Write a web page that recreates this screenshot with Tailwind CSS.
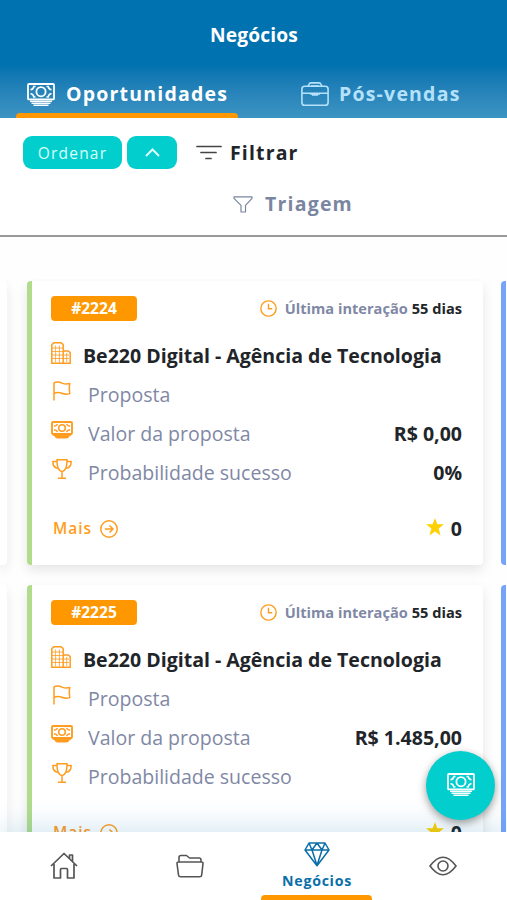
<!DOCTYPE html>
<html lang="pt-BR">
<head>
<meta charset="utf-8">
<title>Negócios</title>
<script src="https://cdn.jsdelivr.net/npm/@tailwindcss/browser@4"></script>
</head>
<body class="bg-[#fefefe] font-['Open_Sans','Noto_Sans',sans-serif]">
<svg class="hidden">
  <symbol id="money" viewBox="0 0 28 23">
    <g fill="none" stroke="currentColor" stroke-width="1.800">
      <rect x="1" y="1" width="26" height="15.400" rx="1"/>
      <circle cx="14" cy="8.700" r="4.600"/>
      <path d="M8.500 3.500H6.800Q6.300 6.300 3.500 6.800M19.500 3.500h1.700q.5 2.800 3.300 3.300M8.500 13.900H6.800q-.5-2.800-3.300-3.300M19.500 13.900h1.700q.5-2.800 3.300-3.300" stroke-width="1.500"/>
      <path d="M3 18.200h22M4.500 20.200h19M6.500 22.200h15" stroke-width="1.500"/>
    </g>
  </symbol>
  <symbol id="money-small" viewBox="0 0 22 18">
    <g fill="none" stroke="currentColor" stroke-width="1.900">
      <rect x="1" y="1" width="20" height="12" rx="1"/>
      <circle cx="11" cy="7" r="3.300" stroke-width="1.600"/>
      <path d="M6.500 3Q5.500 5 3 5.200M6.500 11Q5.500 9 3 8.800M15.500 3q1 2 3.500 2.200M15.500 11q1-2 3.500-2.200" stroke-width="1.500"/>
    </g>
    <path d="M1 12.800h20q-.5 2-2.500 2.500-1 2.200-3 2.200h-9q-2 0-3-2.200-2-.5-2.500-2.500z" fill="currentColor"/>
  </symbol>
  <symbol id="case" viewBox="0 0 28 24">
    <g fill="none" stroke="currentColor" stroke-width="1.600" stroke-linejoin="round">
      <rect x=".9" y="4.300" width="26.200" height="18.900" rx="2.800"/>
      <path d="M7 4.300l1-2q.6-1.400 2-1.400h8q1.400 0 2 1.400l1 2M1 11.300h26"/>
      <path d="M9 12h10M11 13h6M10 3.800h8" stroke-width="1.300"/>
    </g>
  </symbol>
  <symbol id="building" viewBox="0 0 20 22">
    <g fill="none" stroke="currentColor" stroke-width="1.500">
      <path d="M.8 21.200V2.500L3 .8h7l2.200 1.700v18.700zM12.200 9h5.200l1.800 1.600v10.600h-7M.8 21.200h18.400"/>
      <path d="M4.600 3.500v17M8.400 3.500v17M1 6h11M1 9.500h11M1 13h11M1 16.500h11M15.700 11v9M13 13h5M13 16.500h5" stroke-width=".8"/>
    </g>
  </symbol>
  <symbol id="flag" viewBox="0 0 18 20">
    <path d="M1 19.500V2C4 .2 6.500 1 9 2.100s4.500 1.300 7.800.5c-.7 3.400-.6 6.800 0 10-3 1-5.400.6-8-.3s-5-1.100-7.800.2" fill="none" stroke="currentColor" stroke-width="1.500" stroke-linejoin="round"/>
  </symbol>
  <symbol id="trophy" viewBox="0 0 20 20">
    <path d="M5 .8h10c.2 6-1 10.500-5 12-4-1.500-5.200-6-5-12zM5 2.500H.9c-.1 4 1.600 6.500 5.100 6.800M15 2.500h4.100c.1 4-1.600 6.500-5.100 6.800M10 12.800v6M6 19.200h8" fill="none" stroke="currentColor" stroke-width="1.500"/>
  </symbol>
  <symbol id="clock" viewBox="0 0 18 18">
    <path d="M9 .9a8.100 8.100 0 1 0 0 16.200A8.100 8.100 0 0 0 9 .9M9 4v5.300h4" fill="none" stroke="currentColor" stroke-width="1.500"/>
  </symbol>
  <symbol id="arrow" viewBox="0 0 18 18">
    <path d="M9 .8a8.200 8.200 0 1 0 0 16.400A8.200 8.200 0 0 0 9 .8M4.800 9h8M9.500 5.500L13 9l-3.500 3.500" fill="none" stroke="currentColor" stroke-width="1.500"/>
  </symbol>
  <symbol id="star" viewBox="0 0 18 18">
    <path d="M9 0l2.300 6.300H18l-5.400 4.300 2 6.800L9 13.600l-5.600 3.800 2-6.800L0 6.300h6.700z" fill="currentColor"/>
  </symbol>
</svg>

<div class="relative flex h-[900px] w-[507px] flex-col overflow-hidden">
  <header class="flex h-[118px] shrink-0 flex-col bg-linear-to-b from-[#0072b0] from-55% to-[#3d94c2]">
    <h1 class="h-[76px] pt-[21px] pl-px text-center text-[19.200px] leading-[28px] font-bold tracking-[0.15px] text-white">Negócios</h1>
    <nav class="flex flex-1">
      <div class="ml-4 flex w-[222px] flex-col justify-between text-white">
        <div class="flex h-9 items-center pl-[11px]">
          <svg class="mr-[11px] h-[23px] w-[28px]"><use href="#money"/></svg>
          <span class="text-[19.500px] font-bold tracking-[1.200px] whitespace-nowrap">Oportunidades</span>
        </div>
        <div class="h-[5px] rounded-t bg-[#ff9800]"></div>
      </div>
      <div class="ml-[63px] flex h-9 items-center text-[#b5e2fa]">
        <svg class="mr-[10px] h-[24px] w-[28px]"><use href="#case"/></svg>
        <span class="text-[19.500px] font-bold tracking-[1.200px] whitespace-nowrap">Pós-vendas</span>
      </div>
    </nav>
  </header>

  <section class="h-[119px] shrink-0 border-b-2 border-[#9a9a9a] bg-white">
    <div class="flex items-center pt-[18px] pl-[23px]">
      <div class="mr-[5px] flex h-[33px] w-[99px] items-center justify-center rounded-[9px] bg-[#02cece] pt-[2px] text-[15.500px] font-medium tracking-[1.200px] text-[#dcfffb]">Ordenar</div>
      <div class="flex h-[33px] w-[50px] items-center justify-center rounded-[9px] bg-[#02cece] text-[#dcfffb]">
        <svg class="h-[9px] w-[15px]" viewBox="0 0 15 9" fill="none" stroke="currentColor" stroke-width="2"><path d="M1 8l6.500-6.500L14 8"/></svg>
      </div>
      <svg class="ml-[19px] h-[15px] w-[26px]" viewBox="0 0 26 15" stroke="#444" stroke-width="1.700" stroke-linecap="round"><path d="M1 1.500h24M5 7.500h15M10 13.500h5"/></svg>
      <span class="ml-[8px] text-[19.500px] leading-[32px] font-bold tracking-[1.150px] text-[#212529]">Filtrar</span>
    </div>
    <div class="flex items-center pt-[19px] pl-[233px] text-[#7a86a1]">
      <svg class="h-[17px] w-[20px]" viewBox="0 0 20 17" fill="none" stroke="currentColor" stroke-width="1.200" stroke-linejoin="round"><path d="M1 .8h18v1.500l-6.500 7V16H8V9.300L1 2.300z"/></svg>
      <span class="ml-[12px] text-[19.500px] leading-[32px] font-bold tracking-[1.200px]">Triagem</span>
    </div>
  </section>

  <main class="mt-[42px] flex min-h-0 flex-1 overflow-hidden pt-[2px]">
    <div class="flex w-[7px] shrink-0 flex-col gap-5">
      <div class="h-[284px] shrink-0 rounded-r bg-white shadow-[0_5px_12px_rgba(0,0,0,0.1)]"></div>
      <div class="h-[284px] shrink-0 rounded-r bg-white shadow-[0_5px_12px_rgba(0,0,0,0.1)]"></div>
    </div>
    <div id="cards" class="mr-[18px] ml-[19.500px] flex w-[456.500px] shrink-0 flex-col gap-5"></div>
    <div class="flex w-[20px] shrink-0 flex-col gap-5">
      <div class="h-[284px] shrink-0 rounded border-l-[5px] border-[#75a4fb] bg-white"></div>
      <div class="h-[284px] shrink-0 rounded border-l-[5px] border-[#75a4fb] bg-white"></div>
    </div>
  </main>

  <footer class="relative grid h-[68px] shrink-0 grid-cols-[127px_127px_126px_127px] bg-white text-[#555] shadow-[0_-2px_32px_rgba(0,114,176,0.2)]">
    <div class="flex items-center justify-center">
      <svg class="h-[28px] w-[28px]" viewBox="0 0 28 28" fill="none" stroke="currentColor" stroke-width="1.700" stroke-linejoin="round"><path d="M1 14L14 1.500 27 14M4 12v14h6.500V17.500q0-1 1-1h5q1 0 1 1V26H24V12M19.500 6.500V3h3v6.500"/></svg>
    </div>
    <div class="flex items-center justify-center">
      <svg class="mr-px h-[24px] w-[28px]" viewBox="0 0 28 24" fill="none" stroke="currentColor" stroke-width="1.600" stroke-linejoin="round"><path d="M3 8V3.500Q3 1.500 5 1.500h5.500l3 2.500H23q2 0 2 2v2M2.500 8h23q1.600 0 1.500 1.500L25.700 21q-.2 1.800-2 1.800H4.500q-1.800 0-2-1.800L1 9.500Q.9 8 2.500 8z"/></svg>
    </div>
    <div class="flex flex-col items-center pt-[10px] text-[#0a6fa8]">
      <svg class="h-[25px] w-[26px]" viewBox="0 0 26 25" fill="none" stroke="currentColor" stroke-width="1.500" stroke-linejoin="round"><path d="M5 1h16l4 7-12 15.800L1 8zM1 8h24M5 1l3 7 5-7 5 7 3-7M8 8l5 15.500L18 8"/></svg>
      <span class="mt-[3px] text-[14.200px] leading-[22px] font-bold tracking-[0.7px]">Negócios</span>
      <div class="mt-auto mr-px h-[5px] w-[111px] rounded-t bg-[#ff9800]"></div>
    </div>
    <div class="flex items-center justify-center">
      <svg class="mr-px h-[20px] w-[28px]" viewBox="0 0 28 20" fill="none" stroke="currentColor" stroke-width="1.600"><path d="M1 10C5.500 4 9.500 1.200 14 1.200S22.500 4 27 10c-4.500 6-8.500 8.800-13 8.800S5.500 16 1 10z"/><circle cx="14" cy="10" r="5"/></svg>
    </div>
  </footer>

  <button class="absolute top-[751px] left-[426px] flex size-[69px] items-center justify-center rounded-full bg-[#02cece] text-white shadow-[0_3px_8px_rgba(0,0,0,0.4)]">
    <svg class="mb-[2px] h-[23px] w-[28px]"><use href="#money"/></svg>
  </button>
</div>

<template id="card">
  <article class="flex h-[284px] shrink-0 flex-col rounded border-l-[5px] border-[#b0dc8c] bg-white pr-[21px] pl-[19.500px] text-[19.550px] text-[#212529] shadow-[0_5px_12px_rgba(0,0,0,0.1)]">
    <div class="mt-[15px] flex h-[25px] items-center justify-between">
      <span data-f="id" class="flex h-[25px] w-[86px] items-center justify-center rounded bg-[#ff9800] text-[15.600px] leading-[25px] font-bold text-white"></span>
      <span class="flex items-center text-[14.600px] font-bold whitespace-nowrap"><svg class="mr-[8px] size-[17px] text-[#ff9d20]"><use href="#clock"/></svg><span class="mr-[4px] text-[#7f88a5]">Última interação</span>55 dias</span>
    </div>
    <div class="mt-[15px] flex h-[39px] items-center text-[#ff9d20]">
      <svg class="mb-[6px] h-[22px] w-[20px]"><use href="#building"/></svg>
      <span class="ml-[12px] font-bold whitespace-nowrap text-[#212529]">Be220 Digital - Agência de Tecnologia</span>
    </div>
    <div class="flex h-[39px] items-center text-[#ff9d20]">
      <svg class="mb-[8px] ml-[2px] h-[20px] w-[18px]"><use href="#flag"/></svg>
      <span class="ml-[17px] text-[#7f88a5]">Proposta</span>
    </div>
    <div class="flex h-[39px] items-center text-[#ff9d20]">
      <svg class="mb-[8px] h-[18px] w-[22px]"><use href="#money-small"/></svg>
      <span class="ml-[15px] text-[#7f88a5]">Valor da proposta</span>
      <b data-f="value" class="ml-auto text-[#212529]"></b>
    </div>
    <div class="flex h-[39px] items-center text-[#ff9d20]">
      <svg class="mb-[8px] ml-[1px] h-[20px] w-[20px]"><use href="#trophy"/></svg>
      <span class="ml-[16px] text-[#7f88a5]">Probabilidade sucesso</span>
      <b class="ml-auto text-[#212529]">0%</b>
    </div>
    <div class="mt-[20.500px] flex h-[32px] items-center pl-[2px] text-[#ff9d20]">
      <span class="text-[15.500px] font-semibold tracking-[1px]">Mais</span>
      <svg class="ml-[8px] size-[18px]"><use href="#arrow"/></svg>
      <svg class="mr-[7px] mb-[4px] ml-auto size-[18px] text-[#ffd000]"><use href="#star"/></svg>
      <b class="text-[#212529]">0</b>
    </div>
  </article>
</template>
<script>
  const deals = [{ id: '#2224', value: 'R$ 0,00' }, { id: '#2225', value: 'R$ 1.485,00' }];
  for (const deal of deals) {
    const node = document.getElementById('card').content.cloneNode(true);
    for (const el of node.querySelectorAll('[data-f]')) el.textContent = deal[el.dataset.f];
    document.getElementById('cards').append(node);
  }
</script>
</body>
</html>
